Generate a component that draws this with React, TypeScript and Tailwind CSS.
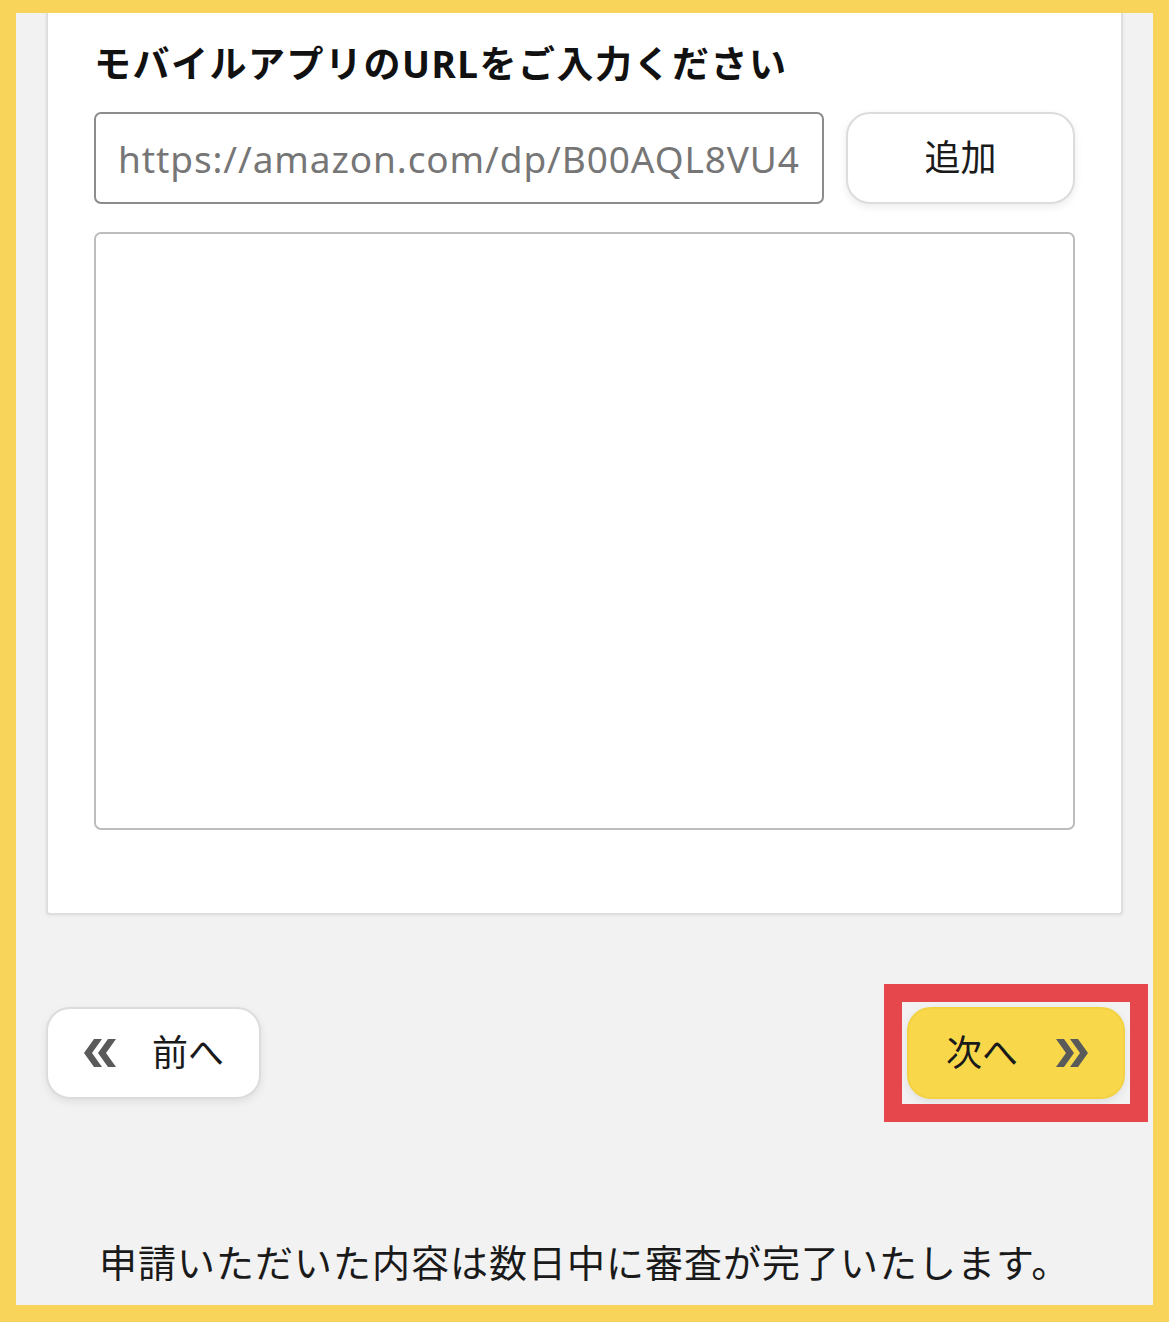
import type { ReactNode } from 'react';

const FONT = { fontFamily: '"Noto Sans", "Noto Sans CJK JP", sans-serif' };

function Chevrons({ dir }: { dir: 'left' | 'right' }) {
  // Bold double chevron, drawn as two filled arrow shapes
  const d =
    dir === 'left'
      ? 'M12 2 L20 2 L10 16 L20 30 L12 30 L2 16 Z M26 2 L34 2 L24 16 L34 30 L26 30 L16 16 Z'
      : 'M2 2 L10 2 L20 16 L10 30 L2 30 L12 16 Z M16 2 L24 2 L34 16 L24 30 L16 30 L26 16 Z';
  return (
    <svg width="36" height="32" viewBox="0 0 36 32" className="shrink-0">
      <path d={d} fill="#5a5a5a" />
    </svg>
  );
}

function PillButton({ children, className }: { children: ReactNode; className: string }) {
  return (
    <button
      className={`h-[92px] rounded-[24px] flex items-center text-[36px] text-[#1a1a1a] shadow-[0_3px_8px_rgba(0,0,0,0.08)] ${className}`}
    >
      {children}
    </button>
  );
}

export default function App() {
  return (
    <div className="h-[1322px] bg-[#f8d55a] pt-[13px] px-[16px] pb-[17px]" style={FONT}>
      <div className="h-full bg-[#f2f2f2] px-[30px] flex flex-col overflow-hidden">
        {/* form card, its top is scrolled off */}
        <div className="bg-white border-x-2 border-b-2 border-[#dedede] rounded-b-[4px] shadow-[0_1px_4px_rgba(0,0,0,0.06)] px-[46px] pt-[26px] pb-[83px]">
          <h2 className="text-[37px] leading-[50px] font-bold text-[#111] tracking-[1.5px]">
            モバイルアプリのURLをご入力ください
          </h2>
          <div className="mt-[23px] flex gap-[22px]">
            <input
              readOnly
              placeholder="https://amazon.com/dp/B00AQL8VU4"
              className="flex-1 min-w-0 h-[92px] rounded-[7px] border-2 border-[#8c8c8c] px-[22px] text-[37px] tracking-[0.9px] text-[#222] placeholder-[#767676] outline-none"
              style={FONT}
            />
            <PillButton className="w-[229px] justify-center bg-white border-2 border-[#dcdcdc]">追加</PillButton>
          </div>
          <textarea
            readOnly
            className="mt-[28px] block w-full h-[598px] rounded-[7px] border-2 border-[#bdbdbd] resize-none outline-none"
          />
        </div>

        <div className="mt-[92px] flex justify-between items-center">
          <PillButton className="w-[215px] pl-[34px] bg-white border-2 border-[#dcdcdc]">
            <Chevrons dir="left" />
            <span className="ml-[34px]">前へ</span>
          </PillButton>
          <div className="relative mr-[-2px]">
            <PillButton className="w-[218px] pl-[37px] bg-[#f8d84a] border-2 border-[#f2d242]">
              <span>次へ</span>
              <span className="ml-[36px]">
                <Chevrons dir="right" />
              </span>
            </PillButton>
            <div className="absolute -inset-[23px] border-[18px] border-[#e5474d] pointer-events-none" />
          </div>
        </div>

        <p className="mt-[138px] pl-[53px] text-[38px] leading-[50px] tracking-[1px] text-[#1a1a1a]">
          申請いただいた内容は数日中に審査が完了いたします。
        </p>
      </div>
    </div>
  );
}
